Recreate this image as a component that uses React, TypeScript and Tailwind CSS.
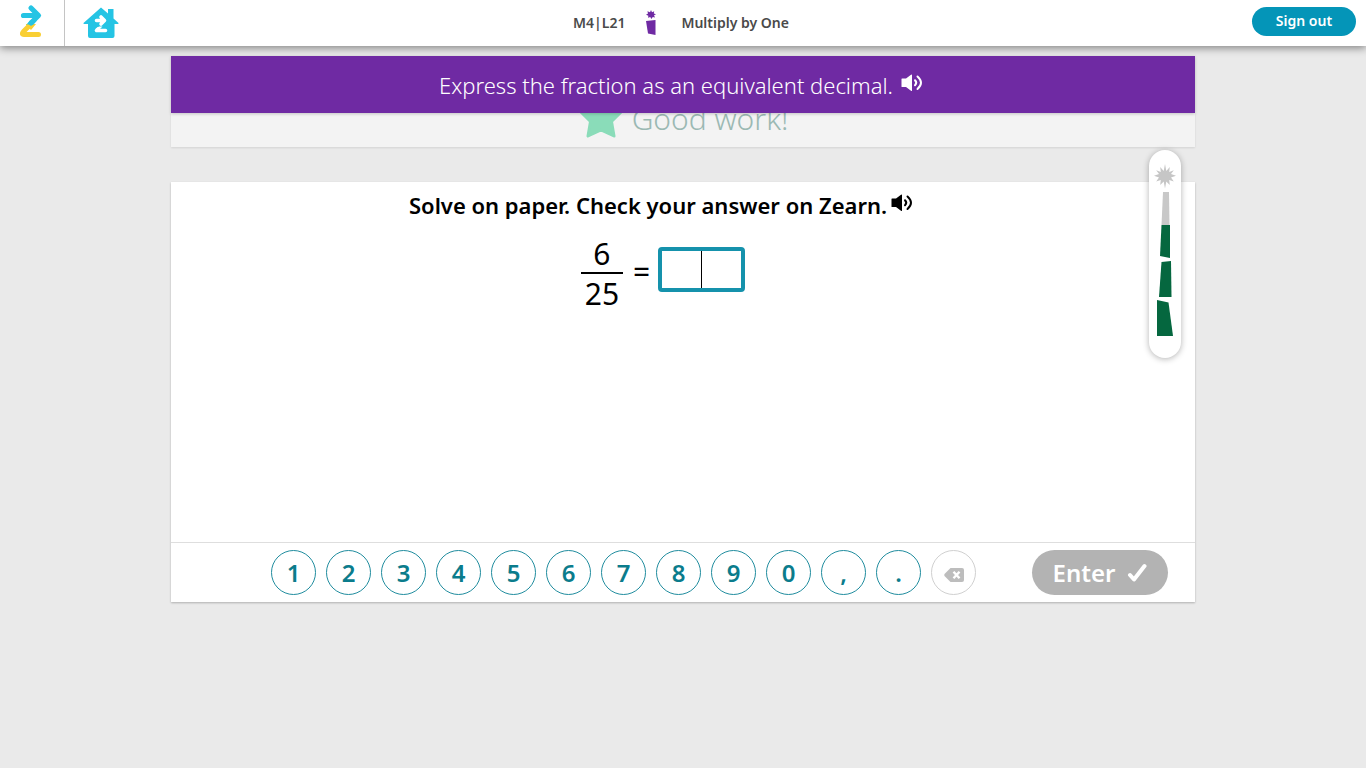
import { useState } from "react";

const KEYS = ["1", "2", "3", "4", "5", "6", "7", "8", "9", "0", ",", "."];

function ZLogo() {
  return (
    <svg width="24" height="34" viewBox="0 0 24 34" fill="none" strokeLinecap="round" strokeLinejoin="round" aria-hidden="true">
      <path d="M9 22L3.500 27.500Q1 30.500 4 30.500H18.500" stroke="#f9cf33" strokeWidth="5" />
      <path d="M6 21V20H16L11 26Z" fill="#f9cf33" />
      <path d="M3.500 11.500H17M11 4L18.500 11.500L11 19" stroke="#25c4e4" strokeWidth="5.200" />
      <path d="M6.500 20.500L10 16.500H17L13.500 20.500Z" fill="#25c4e4" />
    </svg>
  );
}

function HomeLogo() {
  return (
    <svg width="36" height="32" viewBox="0 0 36 32" fill="none" aria-hidden="true">
      <path d="M18 0.500L25 6.500V2H30.500V11.500L35.500 16Q36 17 34.500 17H31.500V29Q31.500 31 29.500 31H7Q5 31 5 29V17H1.500Q0 17 0.500 16Z" fill="#25c4e4" />
      <path d="M13.500 13.500H21M18 10L21.500 13.500L18 17" stroke="#fff" strokeWidth="3.600" strokeLinecap="round" strokeLinejoin="round" />
      <path d="M15 22L13.500 23.500H22.500" stroke="#fff" strokeWidth="3.600" strokeLinecap="round" strokeLinejoin="round" />
      <path d="M12.500 22L16 19.500H19.500L17 22Z" fill="#fff" />
    </svg>
  );
}

function LessonIcon() {
  return (
    <svg width="12" height="26" viewBox="0 0 12 26" fill="#6f2aa3" aria-hidden="true">
      <path d="M6 0L7 2.200L9.200 1.200L8.800 3.400L11 4.200L9 5.200L10 7.400L7.800 7L6.300 9L5.300 7L3 7.800L3.400 5.700L1 4.700L3 3.500L2.400 1.300L5 2.200Z" />
      <path d="M1 11L10.500 10L10.500 25L3 23.500Z" />
    </svg>
  );
}

function Speaker() {
  return (
    <svg width="22" height="18" viewBox="0 0 22 18" fill="none" aria-hidden="true">
      <path d="M0.500 5Q0.500 4.500 1 4.500H5L10 0.700Q11 0 11 1V16.500Q11 17.500 10 16.800L5 13H1Q0.500 13 0.500 12.500Z" fill="currentColor" />
      <path d="M14 6.200Q16.500 8.700 14 11.200M16.500 2.500Q23.500 8.700 16.500 15" stroke="currentColor" strokeWidth="2" strokeLinecap="round" />
    </svg>
  );
}

function Star() {
  return (
    <svg width="46" height="44" viewBox="0 0 46 44" fill="#8adcb9" stroke="#8adcb9" strokeWidth="3" strokeLinejoin="round" aria-hidden="true">
      <path d="M23 2L29.500 15.500L43.500 17.500L33.500 27.500L36 42L23 36L10 42L12.500 27.500L2.500 17.500L16.500 15.500Z" />
    </svg>
  );
}

function ProgressTower() {
  return (
    <svg width="22" height="174" viewBox="0 0 22 174" role="img" aria-label="Progress: 3 of 4">
      <path
        d="M11 0L12.300 7L15.800 3L15.200 8L19.800 6.200L17 10L22 11.800L17 13.600L19.800 17.600L15.200 16L15.800 21L12.300 17.500L11 24.500L9.700 17.500L6.200 21L6.800 16L2.200 17.600L5 13.600L0 11.800L5 10L2.200 6.200L6.800 8L6.200 3L9.700 7Z"
        fill="#c6c6c6"
      />
      <path d="M9 28H15L15.500 61H7.500Z" fill="#c8c8c8" />
      <path d="M7.500 61H16V94L6 92Z" fill="#05673f" />
      <path d="M7.500 98L17 97L17.500 133H5Z" fill="#05673f" />
      <path d="M3 136L14.500 138.500L19 172H3Z" fill="#05673f" />
    </svg>
  );
}

function Backspace() {
  return (
    <svg width="20" height="14" viewBox="0 0 20 14" aria-hidden="true">
      <path d="M6.500 0H18Q20 0 20 2V12Q20 14 18 14H6.500L0.500 8Q0 7 0.500 6Z" fill="#bdbdbd" />
      <path d="M9.500 3.700L15.500 10.300M15.500 3.700L9.500 10.300" stroke="#fff" strokeWidth="2.400" />
    </svg>
  );
}

function Check() {
  return (
    <svg width="20" height="20" viewBox="0 0 20 20" fill="none" aria-hidden="true">
      <path d="M3 12L7 16.500L17.500 3" stroke="#fff" strokeWidth="4" strokeLinecap="round" strokeLinejoin="round" />
    </svg>
  );
}

function Header() {
  return (
    <header className="relative grid h-[46px] grid-cols-[1fr_auto_1fr] items-center bg-white shadow-[0_2px_8px_rgba(0,0,0,0.45)]">
      <nav className="flex h-full items-center">
        <a href="#top" aria-label="Zearn" className="flex h-full w-16 items-center justify-center pb-1">
          <ZLogo />
        </a>
        <a href="#home" aria-label="Home" className="flex h-full items-center border-l border-[#c4c4c4] px-[18px]">
          <HomeLogo />
        </a>
      </nav>
      <div className="flex items-center pr-1 text-sm font-semibold text-[#4a4a4a]">
        <span>M4|L21</span>
        <span className="mr-6 ml-5">
          <LessonIcon />
        </span>
        <h1>Multiply by One</h1>
      </div>
      <button type="button" className="mr-[10px] mb-[3px] h-[29px] w-[104px] justify-self-end rounded-full bg-[#0495b8] pb-px text-sm font-semibold text-white">
        Sign out
      </button>
    </header>
  );
}

export default function App() {
  const [answer, setAnswer] = useState("");
  return (
    <div id="top" className="min-h-screen bg-[#eaeaea] font-['Noto_Sans','Open_Sans',sans-serif] text-black">
      <Header />
      <main className="mx-auto max-w-[1024px] pt-[10px]">
        <div className="relative flex h-[57px] items-center justify-center gap-2 bg-[#6f2aa3] pt-px pr-1 text-white shadow-[0_1px_3px_rgba(0,0,0,0.2)]">
          <h2 className="text-[22px] font-light">Express the fraction as an equivalent decimal.</h2>
          <button type="button" aria-label="Read aloud" className="mb-1">
            <Speaker />
          </button>
        </div>
        <div className="flex h-[34px] items-end justify-center gap-2 overflow-hidden bg-[#f3f3f3] pb-[9px] shadow-[0_1px_2px_rgba(0,0,0,0.1)]">
          <Star />
          <p className="pb-px text-[30px] leading-9 font-light text-[#9bb9b3]">Good work!</p>
        </div>
        <section className="relative mt-[35px] flex min-h-[420px] flex-col bg-white shadow-[0_1px_2px_rgba(0,0,0,0.25)]">
          <div className="flex-1 pt-[7px] pr-10">
            <div className="flex items-center justify-center gap-1 pr-1">
              <h3 className="text-[22px] leading-8 font-semibold">Solve on paper. Check your answer on Zearn.</h3>
              <button type="button" aria-label="Read aloud" className="mb-1">
                <Speaker />
              </button>
            </div>
            <div className="mt-[15px] flex items-center justify-center text-[30px]">
              <div className="flex w-[42px] flex-col text-center leading-9">
                <span className="border-b-2 border-black leading-9">6</span>
                <span className="leading-10">25</span>
              </div>
              <span className="mr-2 mb-[6px] ml-[10px] leading-9">=</span>
              <div className="relative mb-3 flex">
                <input
                  aria-label="Answer"
                  value={answer}
                  onChange={(e) => setAnswer(e.target.value)}
                  className="h-[45px] w-[87px] rounded-sm border-4 border-[#1592ac] bg-white text-center caret-transparent outline-none"
                />
                {answer === "" && <span className="pointer-events-none absolute inset-y-1 left-[43px] w-px bg-black" />}
              </div>
            </div>
          </div>
          <div className="flex h-[60px] items-center justify-between border-t border-[#dedede] pr-[27px] pl-[100px]">
            <div className="flex gap-[10px]">
              {KEYS.map((key) => (
                <button
                  key={key}
                  type="button"
                  onClick={() => setAnswer(answer + key)}
                  className="size-[45px] rounded-full border border-[#1f8c9e] text-2xl font-semibold text-[#0b7c8c]"
                >
                  {key}
                </button>
              ))}
              <button
                type="button"
                aria-label="Backspace"
                onClick={() => setAnswer(answer.slice(0, -1))}
                className="flex size-[45px] items-center justify-center rounded-full border border-[#d0d0d0] pt-1"
              >
                <Backspace />
              </button>
            </div>
            <button type="button" className="flex h-[45px] w-[136px] items-center justify-center gap-3 rounded-full bg-[#b3b3b3] text-2xl font-semibold text-white">
              Enter
              <Check />
            </button>
          </div>
          <aside className="absolute -top-8 right-[14px] flex h-[208px] w-8 justify-center rounded-full bg-white pt-[14px] shadow-[0_1px_6px_rgba(0,0,0,0.3)]">
            <ProgressTower />
          </aside>
        </section>
      </main>
    </div>
  );
}
